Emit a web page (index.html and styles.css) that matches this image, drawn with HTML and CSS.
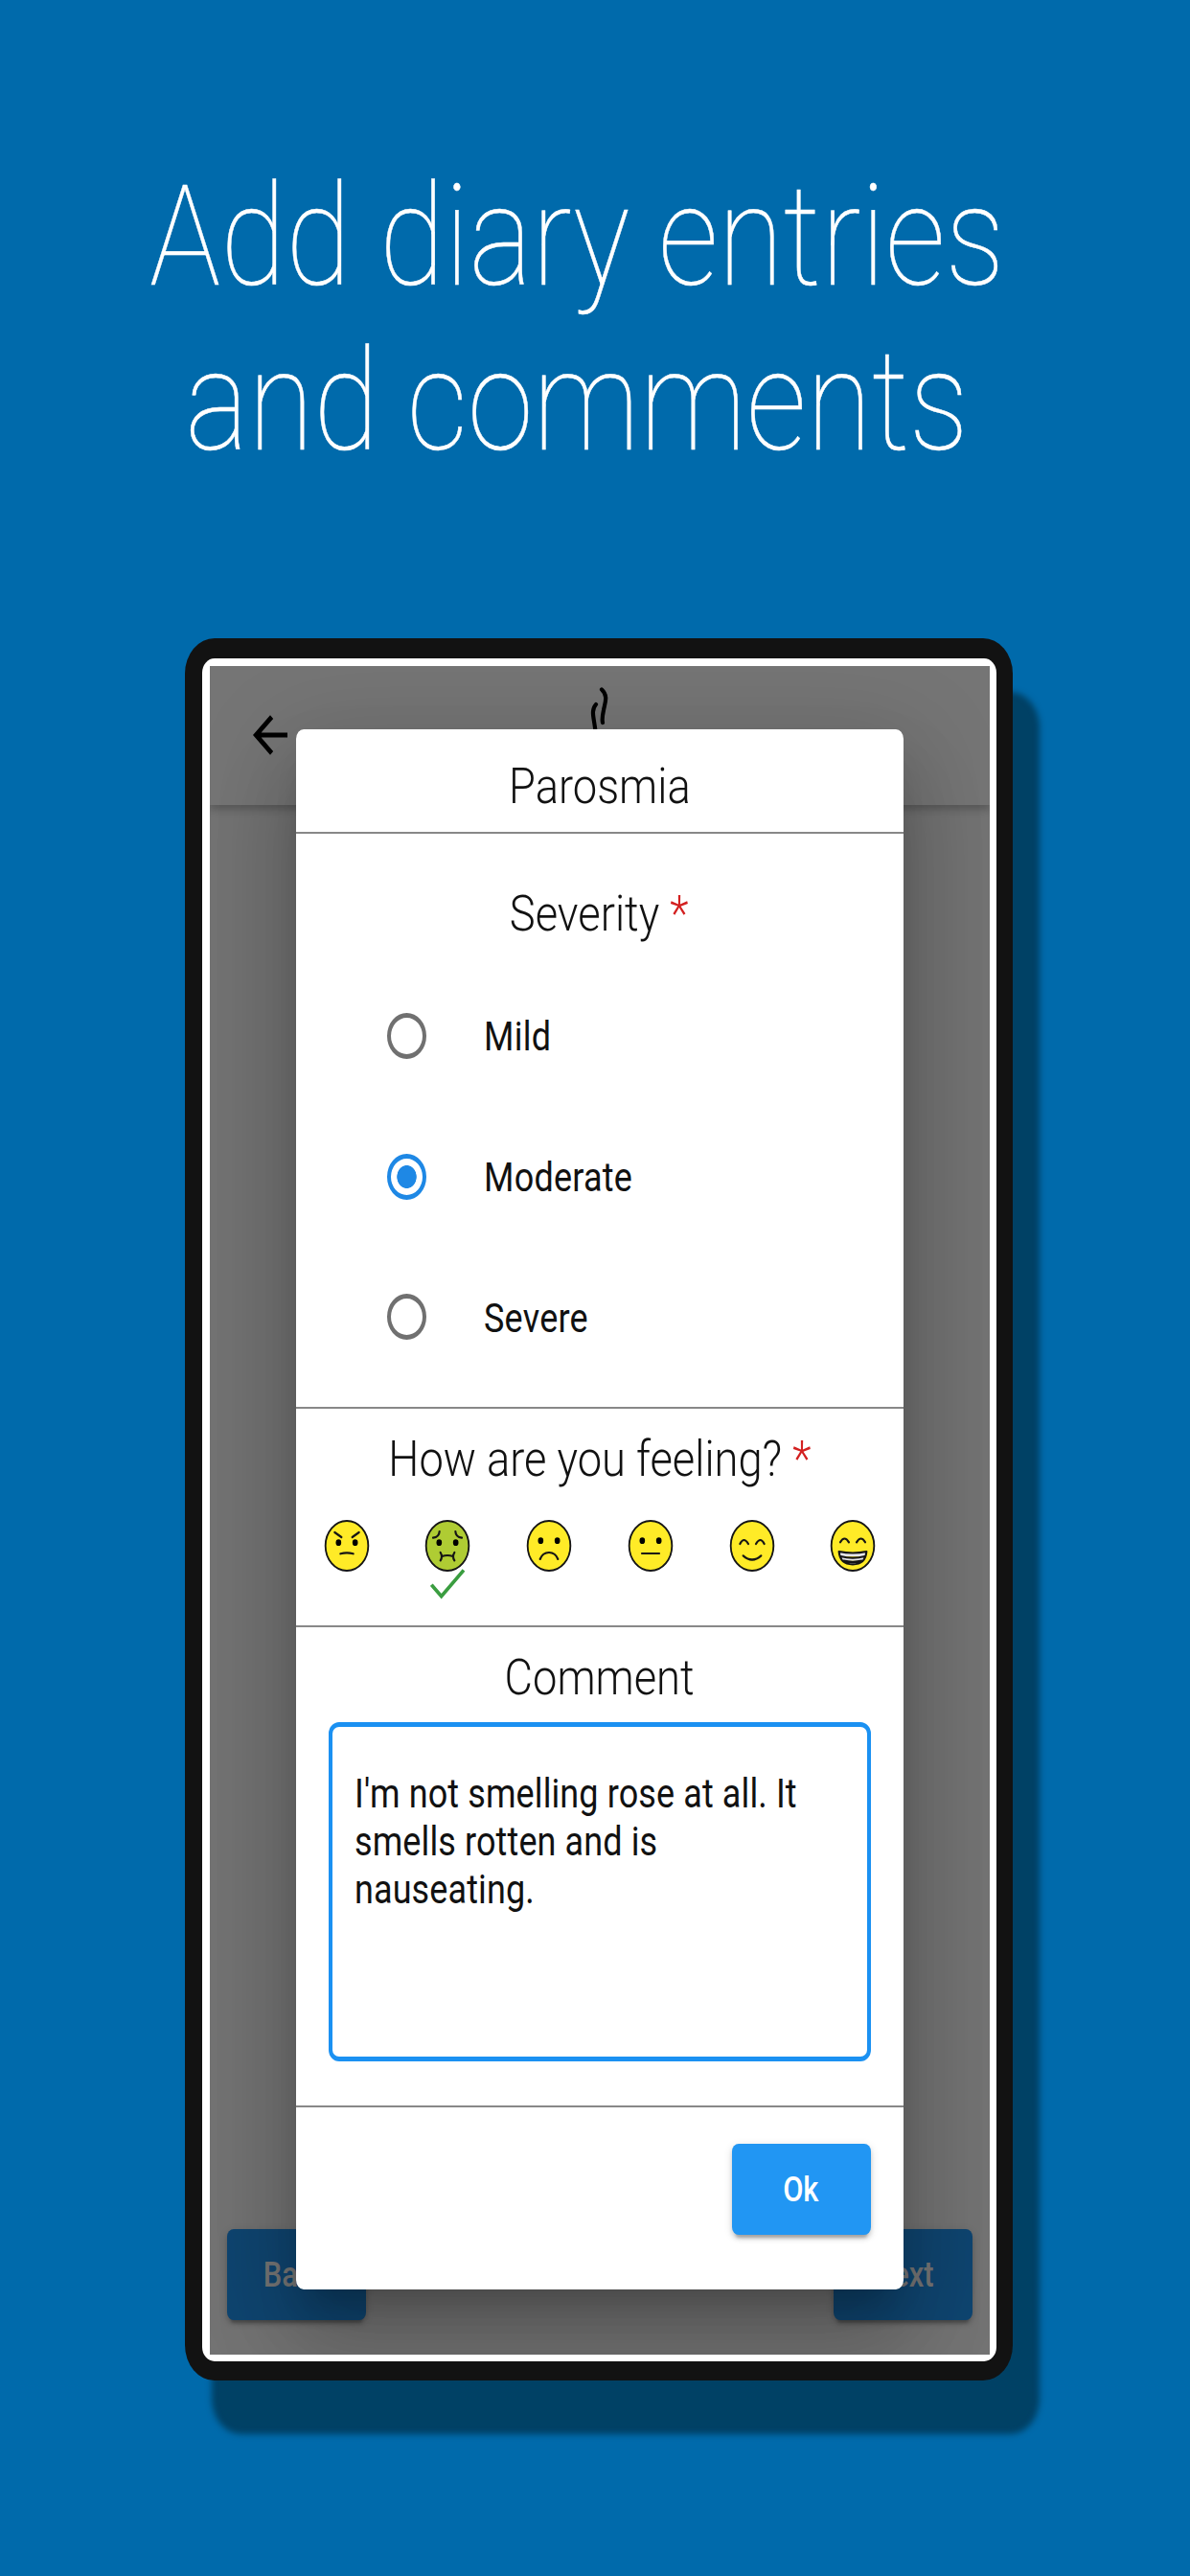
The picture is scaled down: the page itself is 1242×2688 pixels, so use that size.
FILE: index.html
```html
<!DOCTYPE html>
<html lang="en">
<head>
<meta charset="utf-8">
<title>Add diary entries and comments</title>
<link rel="stylesheet" href="styles.css">
</head>
<body>
<main class="poster">
  <h1 class="headline"><span class="line line-one">Add diary entries</span><span class="line line-two">and comments</span></h1>
  <div class="phone">
    <div class="bezel">
      <div class="screen">
        <header class="appbar">
          <svg class="back-arrow" viewBox="0 0 24 24" preserveAspectRatio="none"><path d="M20 11H7.83l5.59-5.59L12 4l-8 8 8 8 1.41-1.41L7.83 13H20z"/></svg>
          <svg class="logo" viewBox="0 0 24 60"><path d="M15 5.5C22 12 18.5 19 17 27C15.5 34 15 36 16 40M9 21C3 28 7.5 36 8.5 50" fill="none" stroke="#000" stroke-width="4.2" stroke-linecap="round"/></svg>
        </header>
        <nav class="nav">
          <button class="btn"><span class="narrow">Back</span></button>
          <button class="btn"><span class="narrow">Next</span></button>
        </nav>
        <div class="overlay">
          <section class="dialog">
            <div class="part title"><h2 class="caption"><span class="narrow">Parosmia</span></h2></div>
            <div class="part severity">
              <h2 class="caption"><span class="narrow">Severity <b class="req">*</b></span></h2>
              <div class="options">
                <label class="option"><i class="radio"></i><span class="narrow">Mild</span></label>
                <label class="option"><i class="radio on"></i><span class="narrow">Moderate</span></label>
                <label class="option"><i class="radio"></i><span class="narrow">Severe</span></label>
              </div>
            </div>
            <div class="part feeling">
              <h2 class="caption"><span class="narrow">How are you feeling? <b class="req">*</b></span></h2>
              <div class="faces">
                <div class="face"><svg viewBox="-72 -84 144 168"><ellipse class="skin" rx="67" ry="78"/><path class="ink" d="M-38-42L-17-27M38-42L17-27M-20 25Q0 19 20 25"/><ellipse cx="-26" cy="-10" rx="8.5" ry="10"/><ellipse cx="26" cy="-10" rx="8.5" ry="10"/></svg></div>
                <div class="face">
                  <svg viewBox="-72 -84 144 168"><ellipse class="skin sick" rx="67" ry="78"/><path class="ink" d="M-45-25Q-26-27-25-45M45-25Q26-27 25-45M-22 21Q-14 34-22 46M22 21Q14 34 22 46M-17 33Q0 27 17 33"/><ellipse cx="-26" cy="-10" rx="8.5" ry="10"/><ellipse cx="26" cy="-10" rx="8.5" ry="10"/></svg>
                  <svg class="check" viewBox="0 0 108 96"><path d="M4 50L35 86L105 4" fill="none" stroke="#3a9d40" stroke-width="11"/></svg>
                </div>
                <div class="face"><svg viewBox="-72 -84 144 168"><ellipse class="skin" rx="67" ry="78"/><path class="ink" d="M-28 42Q-20 21 0 21Q20 21 28 42"/><ellipse cx="-26" cy="-16" rx="8.5" ry="10"/><ellipse cx="26" cy="-16" rx="8.5" ry="10"/></svg></div>
                <div class="face"><svg viewBox="-72 -84 144 168"><ellipse class="skin" rx="67" ry="78"/><path class="ink" d="M-27 24H27"/><ellipse cx="-26" cy="-16" rx="8.5" ry="10"/><ellipse cx="26" cy="-16" rx="8.5" ry="10"/></svg></div>
                <div class="face"><svg viewBox="-72 -84 144 168"><ellipse class="skin" rx="67" ry="78"/><path class="ink" d="M-38-6Q-26-30-12-6M12-6Q26-30 38-6M-28 31Q0 56 28 31"/></svg></div>
                <div class="face"><svg viewBox="-72 -84 144 168"><ellipse class="skin" rx="67" ry="78"/><path class="ink" d="M-39-11Q-26-34-12-11M12-11Q26-34 39-11"/><path class="ink teeth" d="M-43 18Q0 27 43 18Q40 58 0 58Q-40 58-43 18ZM-38 33Q0 43 38 33M-28 47Q0 54 28 47"/></svg></div>
              </div>
            </div>
            <div class="part comment">
              <h2 class="caption"><span class="narrow">Comment</span></h2>
              <div class="textbox"><p class="narrow">I'm not smelling rose at all. It<br>smells rotten and is<br>nauseating.</p></div>
            </div>
            <div class="actions"><button class="btn"><span class="narrow">Ok</span></button></div>
          </section>
        </div>
      </div>
    </div>
  </div>
</main>
</body>
</html>
```
FILE: styles.css
```css
* { box-sizing: border-box; }
body { margin: 0; background: #006aab; font-family: Roboto, sans-serif; color: #111; }
.poster { width: 1242px; height: 2688px; padding-top: 162px; overflow: hidden; background: #006aab; }

.headline { margin: 0; width: 1205px; height: 504px; display: flex; flex-direction: column; align-items: center; color: #fff; font-weight: 100; font-size: 146px; line-height: 172px; white-space: nowrap; -webkit-text-stroke: .5px #fff; }
.line { transform: scaleX(.851); }

.phone { margin-left: 193px; width: 864px; height: 1818px; padding: 21px 17.5px 20.5px 18px; background: #121212; border-radius: 31px / 37px; box-shadow: 28px 56px 6px #004165; }
.bezel { height: 100%; padding: 7.5px 7px 6.5px 7.5px; background: #fff; border-radius: 13px / 15px; }
.screen { position: relative; height: 100%; overflow: hidden; display: flex; flex-direction: column; justify-content: space-between; background: #fafafa; }

.appbar { position: relative; height: 145px; display: flex; align-items: center; padding-left: 36px; background: #fff; box-shadow: 0 5px 8px rgba(0,0,0,.22); }
.back-arrow { width: 54px; height: 62px; }
.logo { position: absolute; left: 394px; top: 19px; width: 24px; height: 60px; }
.nav { display: flex; justify-content: space-between; padding: 0 18px 36px; }

.btn { width: 145px; height: 95px; padding: 1px 0 0; border: 0; border-radius: 7px / 8px; background: #2196f3; color: #fff; font: 500 36px/42px Roboto, sans-serif; box-shadow: 0 7px 3px -4px rgba(0,0,0,.2), 0 4px 5px rgba(0,0,0,.14), 0 2px 10px rgba(0,0,0,.12); }
.narrow { display: inline-block; transform: scaleX(.856); white-space: nowrap; }

.overlay { position: absolute; inset: 0; padding: 66px 90px 68px; background: rgba(0,0,0,.54); }
.dialog { height: 1628px; display: flex; flex-direction: column; background: #fff; border-radius: 8px / 10px; box-shadow: 0 26px 33px -15px rgba(0,0,0,.2), 0 58px 84px 7px rgba(0,0,0,.14), 0 22px 100px 18px rgba(0,0,0,.12); }
.part { border-bottom: 2px solid #888; }
.caption { margin: 0; text-align: center; font-weight: 300; font-size: 51.5px; line-height: 61px; }
.caption .narrow { transform: scaleX(.879); }
.req { font-weight: 300; color: #d32020; }

.title { height: 109px; padding-top: 29px; }
.severity { height: 600px; padding-top: 53px; }
.options { margin-top: 24px; padding-left: 95px; }
.option { height: 146.7px; display: flex; align-items: center; gap: 60px; font-size: 42px; letter-spacing: .3px; }
.option .narrow { padding-top: 2px; transform-origin: left; }
.radio { width: 41px; height: 48px; border: solid #707070; border-width: 5px 4.5px; border-radius: 50%; }
.radio.on { border-color: #1e88e5; background: radial-gradient(ellipse 10.5px 12.3px, #1e88e5 94%, #fff 100%); }

.feeling { height: 228px; padding-top: 22px; }
.faces { margin: 32px 28px 0 29px; display: flex; justify-content: space-between; }
.face { position: relative; width: 48px; height: 56px; }
.face svg { display: block; width: 48px; height: 56px; }
.face .check { position: absolute; left: 6px; top: 52px; width: 36px; height: 32px; }
.skin { fill: #ffeb27; stroke: #151515; stroke-width: 5.5; }
.sick { fill: #afcc33; }
.ink { fill: none; stroke: #151515; stroke-width: 6.5; stroke-linecap: round; stroke-linejoin: round; }
.teeth { fill: #e6e6ea; }

.comment { height: 501px; padding: 22px 34px 0; }
.textbox { margin-top: 16px; height: 354px; padding: 45px 23px 0; border: solid #1b91f2; border-width: 5px 4px; border-radius: 11px / 12px; }
.textbox .narrow { margin: 0; transform-origin: left; font-size: 42px; line-height: 50px; letter-spacing: .15px; }

.actions { display: flex; justify-content: flex-end; padding: 38px 34px 0; }
```
